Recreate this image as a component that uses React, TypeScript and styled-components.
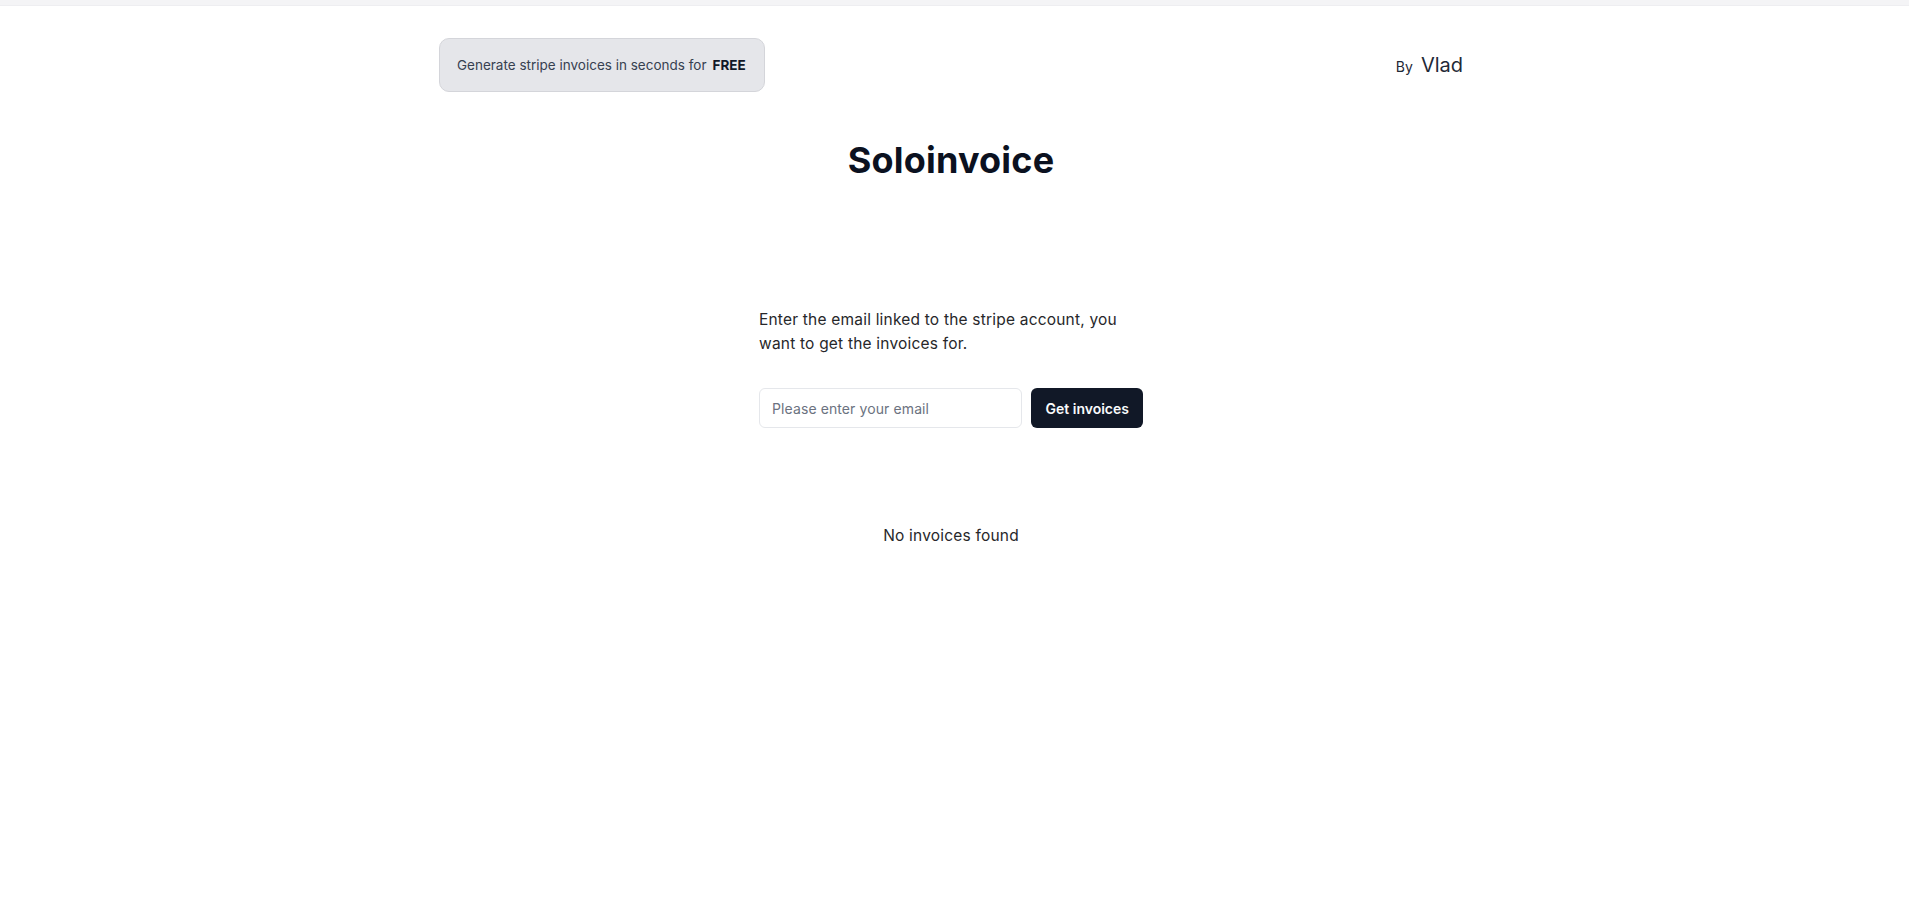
import React from "react";
import styled, { createGlobalStyle } from "styled-components";

const Global = createGlobalStyle`
  html, body { margin: 0; padding: 0; background: #ffffff; }
  body { font-family: Inter, "Noto Sans", "Liberation Sans", sans-serif; color: #18181b; }
  * { box-sizing: border-box; }
`;

const TopStrip = styled.div`
  height: 6px;
  background: #f4f4f6;
  border-bottom: 1px solid #eeeef1;
`;

const Shell = styled.div`
  display: flex;
  justify-content: center;
  padding-right: 7px;
`;

const Container = styled.div`
  width: 1024px;
  display: flex;
  flex-direction: column;
`;

const Header = styled.header`
  display: flex;
  align-items: center;
  justify-content: space-between;
  margin-top: 32px;
`;

const Badge = styled.div`
  display: inline-flex;
  align-items: center;
  gap: 6px;
  padding: 16px 18px 16px 17px;
  background: #e5e6ea;
  border: 1px solid #d4d5da;
  border-radius: 10px;
  font-size: 13.5px;
  line-height: 20px;
  color: #374151;
`;

const Strong = styled.strong`
  font-weight: 700;
  color: #111827;
`;

const Byline = styled.div`
  display: flex;
  align-items: baseline;
  gap: 8px;
  color: #1f2937;
`;

const BySmall = styled.span`
  font-size: 14px;
`;

const ByName = styled.span`
  font-size: 20px;
`;

const Title = styled.h1`
  margin: 48px 0 0;
  text-align: center;
  font-size: 36px;
  line-height: 40px;
  font-weight: 700;
  color: #0b1120;
  letter-spacing: 0.2px;
`;

const Main = styled.main`
  width: 384px;
  margin: 128px auto 0;
  display: flex;
  flex-direction: column;
`;

const Lead = styled.p`
  margin: 0;
  font-size: 15.5px;
  letter-spacing: 0.2px;
  line-height: 24px;
  color: #27272a;
`;

const Form = styled.form`
  display: flex;
  gap: 9px;
  margin-top: 32px;
`;

const EmailInput = styled.input`
  flex: 1;
  height: 40px;
  padding: 0 12px;
  border: 1px solid #e5e7eb;
  border-radius: 6px;
  font-family: inherit;
  font-size: 14px;
  letter-spacing: 0.1px;
  color: #111827;
  outline: none;
  &::placeholder { color: #6b7280; }
`;

const Button = styled.button`
  height: 40px;
  padding: 0 14px;
  border: none;
  border-radius: 6px;
  background: #111827;
  color: #f9fafb;
  font-family: inherit;
  font-size: 14px;
  font-weight: 600;
  cursor: pointer;
`;

const Empty = styled.p`
  margin: 96px 0 0;
  text-align: center;
  font-size: 15.5px;
  letter-spacing: 0.2px;
  line-height: 24px;
  color: #27272a;
`;

export default function App() {
  return (
    <>
      <Global />
      <TopStrip />
      <Shell>
        <Container>
          <Header>
            <Badge>
              Generate stripe invoices in seconds for <Strong>FREE</Strong>
            </Badge>
            <Byline>
              <BySmall>By</BySmall>
              <ByName>Vlad</ByName>
            </Byline>
          </Header>
          <Title>Soloinvoice</Title>
          <Main>
            <Lead>Enter the email linked to the stripe account, you want to get the invoices for.</Lead>
            <Form onSubmit={(e) => e.preventDefault()}>
              <EmailInput type="email" placeholder="Please enter your email" />
              <Button type="submit">Get invoices</Button>
            </Form>
            <Empty>No invoices found</Empty>
          </Main>
        </Container>
      </Shell>
    </>
  );
}
